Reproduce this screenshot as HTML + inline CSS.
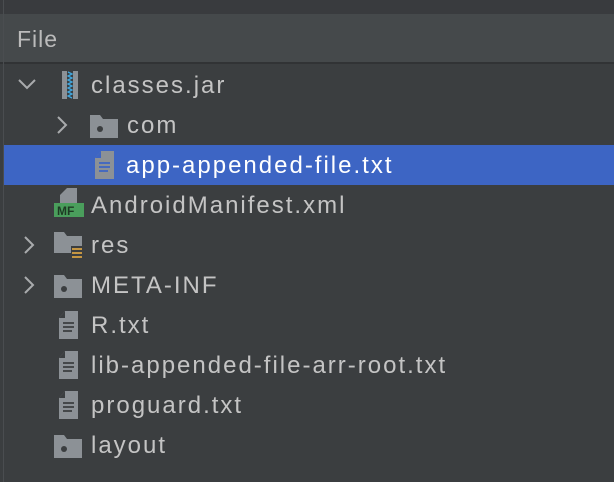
<!DOCTYPE html>
<html><head><style>
body{margin:0;width:614px;height:482px;background:#3b3e40;position:relative;overflow:hidden;font-family:"Liberation Sans",sans-serif;}
.top{position:absolute;left:0;top:0;width:614px;height:14px;background:#393b3e}
.hdr{position:absolute;left:0;top:14px;width:614px;height:48px;background:#45494b;color:#bbbbbb;font-size:23px;line-height:50px;letter-spacing:1px}
.hdr span{position:absolute;left:17px}
.line{position:absolute;left:0;top:62px;width:614px;height:2px;background:#313335}
.lb{position:absolute;left:3px;top:0;width:1px;height:482px;background:#4a4d50}
.row{position:absolute;left:4px;width:610px;height:40px;color:#c4c4c4;font-size:24px;line-height:40px;letter-spacing:2px;white-space:nowrap}
.row .t{position:absolute;top:1px}
.sel{background:#3d65c4;color:#fff}
svg{position:absolute}
</style></head><body>
<div class="top"></div>
<div class="hdr"><span>File</span></div>
<div class="line"></div>
<div class="lb"></div>

<div class="row" style="top:65px">
<svg style="left:13px;top:12px" width="20" height="14"><path d="M2 3l8 8 8-8" stroke="#a9abad" stroke-width="2" fill="none"/></svg>
<svg style="left:54px;top:5px" width="24" height="30"><rect x="4" y="1" width="16" height="28" fill="#8c9196"/><rect x="9" y="1" width="6" height="28" fill="#3b3e40"/><path d="M10 2l4 2-4 2 4 2-4 2 4 2-4 2 4 2-4 2 4 2-4 2 4 2-4 2 4 2" stroke="#40a8e0" stroke-width="1.3" fill="none"/></svg>
<span class="t" style="left:87px">classes.jar</span></div>

<div class="row" style="top:105px">
<svg style="left:51px;top:10px" width="14" height="20"><path d="M3 2l8 8-8 8" stroke="#a9abad" stroke-width="2" fill="none"/></svg>
<svg style="left:86px;top:10px" width="30" height="24"><path d="M0 0h10l3 4h15v19h-28z" fill="#8c9196"/><circle cx="10" cy="14" r="3" fill="#3b3e40"/></svg>
<span class="t" style="left:123px">com</span></div>

<div class="row sel" style="top:145px">
<svg style="left:90px;top:5px" width="22" height="30"><path d="M7 1h13v28h-19v-21z" fill="#8c9196"/><path d="M1 8l6-7v7z" fill="#3d65c4"/><path d="M5 13h11M5 17h11M5 21h9" stroke="#3d65c4" stroke-width="1.8"/></svg>
<span class="t" style="left:122px">app-appended-file.txt</span></div>

<div class="row" style="top:185px">
<svg style="left:50px;top:2px" width="36" height="34"><path d="M13 1h10v16h-17v-9z" fill="#8c9196"/><rect x="0" y="16" width="30" height="14" fill="#4a9e5c"/><text x="3" y="28" font-size="12" font-weight="bold" fill="#1e3b24" font-family="Liberation Sans" letter-spacing="0">MF</text></svg>
<span class="t" style="left:87px">AndroidManifest.xml</span></div>

<div class="row" style="top:225px">
<svg style="left:18px;top:10px" width="14" height="20"><path d="M3 2l8 8-8 8" stroke="#a9abad" stroke-width="2" fill="none"/></svg>
<svg style="left:50px;top:7px" width="32" height="30"><path d="M0 0h10l3 4h15v17h-28z" fill="#8c9196"/><rect x="17" y="14" width="12" height="14" fill="#3b3e40"/><path d="M18 17h10M18 21h10M18 25h10" stroke="#d9a343" stroke-width="1.8"/></svg>
<span class="t" style="left:87px">res</span></div>

<div class="row" style="top:265px">
<svg style="left:18px;top:10px" width="14" height="20"><path d="M3 2l8 8-8 8" stroke="#a9abad" stroke-width="2" fill="none"/></svg>
<svg style="left:50px;top:10px" width="30" height="24"><path d="M0 0h10l3 4h15v19h-28z" fill="#8c9196"/><circle cx="10" cy="14" r="3" fill="#3b3e40"/></svg>
<span class="t" style="left:87px">META-INF</span></div>

<div class="row" style="top:305px">
<svg style="left:54px;top:5px" width="22" height="30"><path d="M7 1h13v28h-19v-21z" fill="#8c9196"/><path d="M1 8l6-7v7z" fill="#3b3e40"/><path d="M5 13h11M5 17h11M5 21h9" stroke="#3b3e40" stroke-width="1.8"/></svg>
<span class="t" style="left:87px">R.txt</span></div>

<div class="row" style="top:345px">
<svg style="left:54px;top:5px" width="22" height="30"><path d="M7 1h13v28h-19v-21z" fill="#8c9196"/><path d="M1 8l6-7v7z" fill="#3b3e40"/><path d="M5 13h11M5 17h11M5 21h9" stroke="#3b3e40" stroke-width="1.8"/></svg>
<span class="t" style="left:87px">lib-appended-file-arr-root.txt</span></div>

<div class="row" style="top:385px">
<svg style="left:54px;top:5px" width="22" height="30"><path d="M7 1h13v28h-19v-21z" fill="#8c9196"/><path d="M1 8l6-7v7z" fill="#3b3e40"/><path d="M5 13h11M5 17h11M5 21h9" stroke="#3b3e40" stroke-width="1.8"/></svg>
<span class="t" style="left:87px">proguard.txt</span></div>

<div class="row" style="top:425px">
<svg style="left:50px;top:10px" width="30" height="24"><path d="M0 0h10l3 4h15v19h-28z" fill="#8c9196"/><circle cx="10" cy="14" r="3" fill="#3b3e40"/></svg>
<span class="t" style="left:87px">layout</span></div>
</body></html>
